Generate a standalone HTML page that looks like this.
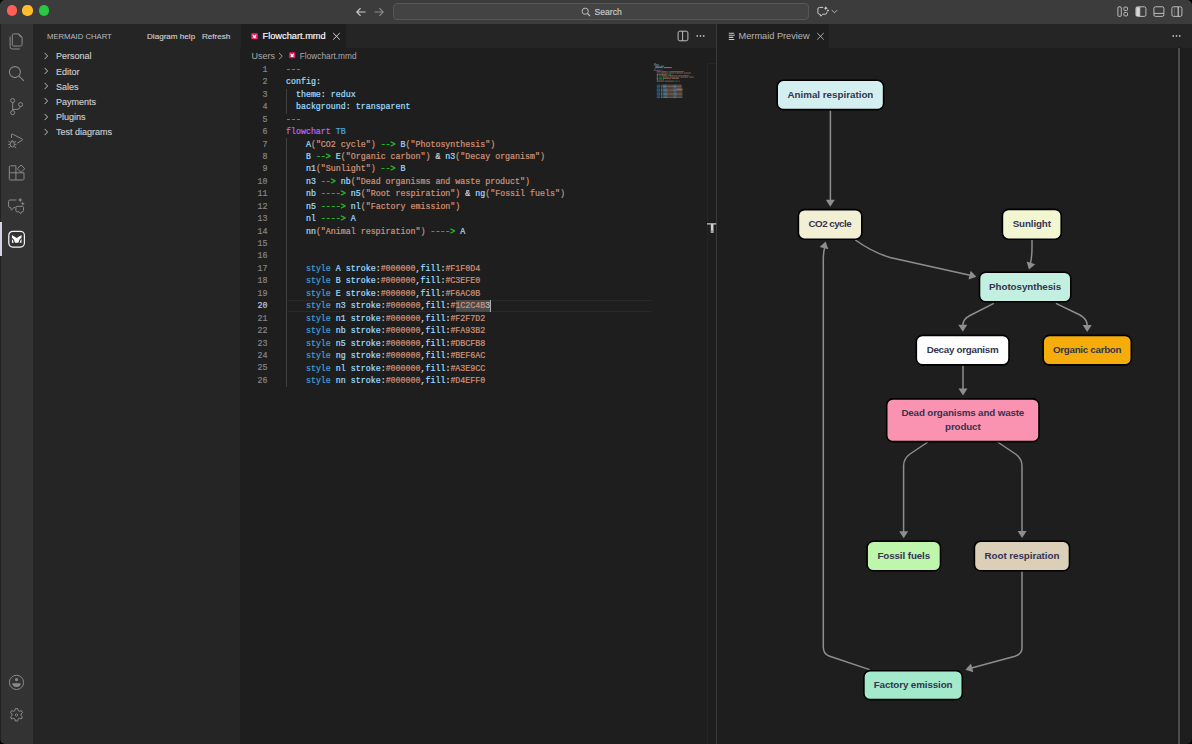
<!DOCTYPE html>
<html><head><meta charset="utf-8">
<style>
*{margin:0;padding:0;box-sizing:border-box}
html,body{width:1192px;height:744px;overflow:hidden;background:#1e1e1e;font-family:"Liberation Sans",sans-serif}
.a{position:absolute}
#title{left:0;top:0;width:1192px;height:23.8px;background:#3c3c3c}
#act{left:0;top:23.8px;width:33px;height:721px;background:#333333}
#side{left:33px;top:23.8px;width:207px;height:721px;background:#252526}
#ed{left:240px;top:23.8px;width:476px;height:721px;background:#1e1e1e}
#edtabs{left:240px;top:23.8px;width:476px;height:24px;background:#252526}
#edtab{left:241px;top:23.8px;width:105px;height:24px;background:#1e1e1e}
#sep{left:716px;top:23.8px;width:1px;height:721px;background:#3a3a3a}
#pv{left:717px;top:23.8px;width:475px;height:721px;background:#1e1e1e}
#pvtabs{left:717px;top:23.8px;width:475px;height:24px;background:#252526}
#pvtab{left:717px;top:23.8px;width:112px;height:24px;background:#1e1e1e}
.side-t{font-size:7.7px;color:#bbbbbb;white-space:nowrap}
.side-b{font-size:8.1px;color:#cccccc;white-space:nowrap;-webkit-text-stroke:0.15px #cccccc}
.tree{font-size:9px;color:#cccccc;white-space:nowrap;-webkit-text-stroke:0.15px #cccccc}
.code{-webkit-text-stroke:0.22px currentColor;font-family:"Liberation Mono",monospace;font-size:8.31px;white-space:pre;line-height:12.44px}
.ln{-webkit-text-stroke:0.2px currentColor;font-family:"Liberation Mono",monospace;font-size:8.33px;color:#858585;text-align:right;width:29.6px;line-height:12.44px}
</style></head><body>
<div id="title" class="a"></div>

<!-- traffic lights -->
<div class="a" style="left:6.7px;top:5.4px;width:10.2px;height:10.2px;border-radius:50%;background:#ff5f57"></div>
<div class="a" style="left:22.4px;top:5.4px;width:10.2px;height:10.2px;border-radius:50%;background:#febc2e"></div>
<div class="a" style="left:38.5px;top:5.4px;width:10.2px;height:10.2px;border-radius:50%;background:#28c840"></div>
<!-- nav arrows -->
<svg class="a" style="left:355px;top:7px" width="12" height="10" viewBox="0 0 12 10"><path d="M10.5 5H1.8M5.6 1.2L1.8 5l3.8 3.8" stroke="#cccccc" stroke-width="1.1" fill="none"/></svg>
<svg class="a" style="left:373px;top:7px" width="12" height="10" viewBox="0 0 12 10"><path d="M1.5 5h8.7M6.4 1.2L10.2 5 6.4 8.8" stroke="#8a8a8a" stroke-width="1.1" fill="none"/></svg>
<!-- search box -->
<div class="a" style="left:393px;top:3.3px;width:416px;height:16.4px;border-radius:4px;background:#434343;border:1px solid #575757"></div>
<svg class="a" style="left:581px;top:7px" width="10" height="10" viewBox="0 0 10 10"><circle cx="4.2" cy="4.2" r="3.1" stroke="#bbbbbb" stroke-width="1" fill="none"/><path d="M6.5 6.5L9 9" stroke="#bbbbbb" stroke-width="1.1"/></svg>
<div class="a" style="left:594.5px;top:7px;font-size:8.6px;color:#cccccc;white-space:nowrap;-webkit-text-stroke:0.15px #cccccc">Search</div>
<!-- copilot -->
<svg class="a" style="left:816px;top:5px" width="14" height="13" viewBox="0 0 14 13"><path d="M7.2 2.4H3.5Q1.9 2.4 1.9 4v3.6q0 1.6 1.6 1.6h.6l.6 2 2-2h2.6q1.6 0 1.6-1.6V6.5" stroke="#cccccc" stroke-width="1" fill="none"/><path d="M9.8 1.2l.6 1.4 1.4.6-1.4.6-.6 1.4-.6-1.4-1.4-.6 1.4-.6z" fill="#dddddd"/><path d="M12 4.3l.4.8.8.4-.8.4-.4.8-.4-.8-.8-.4.8-.4z" fill="#dddddd"/></svg>
<svg class="a" style="left:831px;top:9px" width="7" height="5" viewBox="0 0 7 5"><path d="M.7 1l2.8 2.8L6.3 1" stroke="#bbbbbb" stroke-width="0.9" fill="none"/></svg>
<!-- layout icons -->
<svg class="a" style="left:1117px;top:6px" width="12" height="11" viewBox="0 0 12 11"><rect x="0.9" y="0.8" width="3.4" height="9.6" rx="1.2" stroke="#c8c8c8" stroke-width="0.9" fill="none"/><rect x="6.9" y="1.1" width="3.6" height="3.4" rx="0.9" stroke="#c8c8c8" stroke-width="0.9" fill="none"/><rect x="6.9" y="6.5" width="3.6" height="3.4" rx="0.9" stroke="#c8c8c8" stroke-width="0.9" fill="none"/></svg>
<svg class="a" style="left:1135px;top:6px" width="12" height="11" viewBox="0 0 12 11"><rect x="0.9" y="0.8" width="10" height="9.6" rx="1.6" stroke="#c8c8c8" stroke-width="0.9" fill="none"/><rect x="1.2" y="1.2" width="3.6" height="8.8" fill="#d8d8d8"/><path d="M4.8 1v9.2" stroke="#c8c8c8" stroke-width="0.9"/></svg>
<svg class="a" style="left:1153px;top:6px" width="12" height="11" viewBox="0 0 12 11"><rect x="0.9" y="0.8" width="10" height="9.6" rx="1.6" stroke="#c8c8c8" stroke-width="0.9" fill="none"/><path d="M1 7.4h9.8" stroke="#c8c8c8" stroke-width="0.9"/></svg>
<svg class="a" style="left:1171px;top:6px" width="12" height="11" viewBox="0 0 12 11"><rect x="0.9" y="0.8" width="10" height="9.6" rx="1.6" stroke="#c8c8c8" stroke-width="0.9" fill="none"/><path d="M7.2 1v9.2" stroke="#c8c8c8" stroke-width="1.2"/><path d="M3.6 1v9.2" stroke="#777" stroke-width="0.6"/></svg>
<div id="act" class="a"></div>

<div class="a" style="left:0;top:23.8px;width:1px;height:721px;background:#222"></div>
<!-- files -->
<svg class="a" style="left:8px;top:31.7px" width="17" height="19" viewBox="0 0 17 19"><path d="M4.3 3.2Q4.3 1.9 5.6 1.9H10.8L14.1 5.2V12.7Q14.1 14 12.8 14H5.6Q4.3 14 4.3 12.7Z" stroke="#8a8a8a" stroke-width="1" fill="none"/><path d="M10.8 2Q10.9 5.1 14 5.2" stroke="#8a8a8a" stroke-width="1" fill="none"/><path d="M2.1 4.6V14.6Q2.1 17 4.5 17H11.8" stroke="#8a8a8a" stroke-width="1" fill="none"/></svg>
<!-- search -->
<svg class="a" style="left:8px;top:65px" width="18" height="18" viewBox="0 0 18 18"><circle cx="6.9" cy="7.1" r="5.5" stroke="#8a8a8a" stroke-width="1.05" fill="none"/><path d="M10.9 11.1l5 4.8" stroke="#8a8a8a" stroke-width="1.1"/></svg>
<!-- scm -->
<svg class="a" style="left:8px;top:97px" width="17" height="19" viewBox="0 0 17 19"><circle cx="4.7" cy="3.5" r="2" stroke="#8a8a8a" stroke-width="1" fill="none"/><circle cx="4.7" cy="15.6" r="2" stroke="#8a8a8a" stroke-width="1" fill="none"/><circle cx="12.6" cy="7.6" r="2" stroke="#8a8a8a" stroke-width="1" fill="none"/><path d="M4.7 5.5v8.1M12.4 9.6q-.4 2.5-3.4 2.8H4.9" stroke="#8a8a8a" stroke-width="1" fill="none"/></svg>
<!-- debug -->
<svg class="a" style="left:7px;top:132px" width="19" height="18" viewBox="0 0 19 18"><path d="M4.5 6V2.6Q4.5 1.5 5.5 2.1L15.2 7.1Q16 7.7 15.2 8.2L10.3 11.2" stroke="#8a8a8a" stroke-width="1" fill="none" stroke-linejoin="round"/><ellipse cx="5.3" cy="12.3" rx="2.1" ry="2.7" stroke="#8a8a8a" stroke-width="1" fill="none"/><path d="M3.9 9.5Q5.3 8 6.7 9.5M1.2 12.4h1.9M7.5 12.4h1.9M1.5 9.3l1.9 1.1M9.1 9.3l-1.9 1.1M1.5 15.8l1.9-1.3M9.1 15.8l-1.9-1.3" stroke="#8a8a8a" stroke-width="1" fill="none"/></svg>
<!-- extensions -->
<svg class="a" style="left:8px;top:163px" width="18" height="18" viewBox="0 0 18 18"><path d="M1.3 4.1q0-1.3 1.3-1.3h5.3v14.2H2.6q-1.3 0-1.3-1.3z M1.3 9.8h14.7v5.9q0 1.3-1.3 1.3H7.9" stroke="#8a8a8a" stroke-width="1" fill="none"/><path d="M13 2l3.7 3.7-3.7 3.7-3.7-3.7z" stroke="#8a8a8a" stroke-width="1" fill="none" stroke-linejoin="round"/></svg>
<!-- chat -->
<svg class="a" style="left:7px;top:197px" width="19" height="19" viewBox="0 0 19 19"><path d="M9.3 3H2.9Q1.6 3 1.6 4.3v4.9Q1.6 10.5 2.9 10.5h.7l.8 2.6 2.6-2.6h1.2" stroke="#8a8a8a" stroke-width="1" fill="none" stroke-linejoin="round"/><path d="M10.1 9.3h5.2q1.2 0 1.2 1.2v3.1q0 1.2-1.2 1.2h-.6l-1 1.9-1.6-1.9h-2q-1.2 0-1.2-1.2v-3.1q0-1.2 1.2-1.2z" stroke="#8a8a8a" stroke-width="1" fill="none" stroke-linejoin="round"/><path d="M13.2 .6l.7 1.7 1.7.7-1.7.7-.7 1.7-.7-1.7-1.7-.7 1.7-.7z M15.8 4.7l.6 1.4 1.4.6-1.4.6-.6 1.4-.6-1.4-1.4-.6 1.4-.6z" fill="#8a8a8a"/></svg>
<!-- active indicator -->
<div class="a" style="left:0;top:222.4px;width:1.8px;height:33.3px;background:#d4d4e6"></div>
<!-- mermaid -->
<svg class="a" style="left:7px;top:230px" width="19" height="19" viewBox="0 0 19 19"><rect x="1.8" y="1.4" width="15.6" height="15.6" rx="3.9" stroke="#f2f2f2" stroke-width="1.25" fill="none"/><path d="M4.9 5.1L9.7 7.9 14.5 5.1V12.8H4.9z" fill="#ffffff"/><path d="M4.7 8.2Q6.8 9.4 7.5 13M14.7 8.2Q12.6 9.4 11.9 13" stroke="#333" stroke-width="1.25" fill="none"/></svg>
<!-- account -->
<svg class="a" style="left:8px;top:674px" width="17" height="17" viewBox="0 0 17 17"><circle cx="8.5" cy="8.4" r="7.1" stroke="#8a8a8a" stroke-width="1" fill="none"/><circle cx="8.5" cy="5.6" r="1.6" fill="#8a8a8a"/><path d="M4.3 9.3h8.4q0 3.6-4.2 3.6-4.2 0-4.2-3.6z" fill="#8a8a8a"/></svg>
<!-- settings -->
<svg class="a" style="left:8px;top:707px" width="17" height="17" viewBox="0 0 17 17"><path d="M7.3 1.6h2.4l.4 2 1.3.7 1.9-.7 1.2 2.1-1.5 1.3v1.6l1.5 1.3-1.2 2.1-1.9-.7-1.3.7-.4 2H7.3l-.4-2-1.3-.7-1.9.7-1.2-2.1 1.5-1.3V7l-1.5-1.3 1.2-2.1 1.9.7 1.3-.7z" stroke="#8a8a8a" stroke-width="1" fill="none" stroke-linejoin="round"/><path d="M8.5 6.6l1.4 1.4-1.4 1.4-1.4-1.4z" stroke="#8a8a8a" stroke-width="0.9" fill="none"/></svg>
<div id="side" class="a"></div>
<div id="ed" class="a"></div>
<div id="edtabs" class="a"></div>
<div id="edtab" class="a"></div>
<div id="pv" class="a"></div>
<div id="pvtabs" class="a"></div>
<div id="pvtab" class="a"></div>

<div class="a side-t" style="left:47px;top:31.5px">MERMAID CHART</div>
<div class="a side-b" style="left:147px;top:32.1px">Diagram help</div>
<div class="a side-b" style="left:202px;top:32.1px">Refresh</div>
<svg class="a" style="left:43px;top:52.1px" width="7" height="8" viewBox="0 0 7 8"><path d="M1.6 .9l3 3.1-3 3.1" stroke="#c5c5c5" stroke-width="0.95" fill="none"/></svg><div class="a tree" style="left:56px;top:51.4px">Personal</div><svg class="a" style="left:43px;top:67.2px" width="7" height="8" viewBox="0 0 7 8"><path d="M1.6 .9l3 3.1-3 3.1" stroke="#c5c5c5" stroke-width="0.95" fill="none"/></svg><div class="a tree" style="left:56px;top:66.5px">Editor</div><svg class="a" style="left:43px;top:82.3px" width="7" height="8" viewBox="0 0 7 8"><path d="M1.6 .9l3 3.1-3 3.1" stroke="#c5c5c5" stroke-width="0.95" fill="none"/></svg><div class="a tree" style="left:56px;top:81.6px">Sales</div><svg class="a" style="left:43px;top:97.4px" width="7" height="8" viewBox="0 0 7 8"><path d="M1.6 .9l3 3.1-3 3.1" stroke="#c5c5c5" stroke-width="0.95" fill="none"/></svg><div class="a tree" style="left:56px;top:96.7px">Payments</div><svg class="a" style="left:43px;top:112.5px" width="7" height="8" viewBox="0 0 7 8"><path d="M1.6 .9l3 3.1-3 3.1" stroke="#c5c5c5" stroke-width="0.95" fill="none"/></svg><div class="a tree" style="left:56px;top:111.8px">Plugins</div><svg class="a" style="left:43px;top:127.6px" width="7" height="8" viewBox="0 0 7 8"><path d="M1.6 .9l3 3.1-3 3.1" stroke="#c5c5c5" stroke-width="0.95" fill="none"/></svg><div class="a tree" style="left:56px;top:126.9px">Test diagrams</div>
<svg class="a" style="left:250.6px;top:32.6px" width="7" height="6.6" viewBox="0 0 7 6.6"><rect x="0" y="0" width="7" height="6.6" rx="1.4" fill="#e5135f"/><path d="M1.5 1.5q1.3 0 2 1.3.7-1.3 2-1.3-.1 1-.5 1.8-.4.8-.5 1.6h.4l.4-.9v1.3H1.7V4l.4.9h.4q-.1-.8-.5-1.6-.4-.8-.5-1.8z" fill="#fff"/></svg>
<div class="a" style="left:262.5px;top:31.2px;font-size:9.25px;color:#ffffff;white-space:nowrap;-webkit-text-stroke:0.15px #ffffff">Flowchart.mmd</div>
<svg class="a" style="left:332px;top:32px" width="9" height="9" viewBox="0 0 9 9"><path d="M1.2 1l6.6 6.6M7.8 1L1.2 7.6" stroke="#dcdcdc" stroke-width="0.95"/></svg>
<!-- split / more -->
<svg class="a" style="left:677px;top:30px" width="12" height="12" viewBox="0 0 12 12"><rect x="1.1" y="1.2" width="9.8" height="9.6" rx="1.7" stroke="#c5c5c5" stroke-width="0.95" fill="none"/><path d="M5.6 1.3v9.5" stroke="#c5c5c5" stroke-width="0.95"/></svg>
<svg class="a" style="left:696px;top:34px" width="10" height="4" viewBox="0 0 10 4"><circle cx="1.3" cy="1.9" r="0.85" fill="#c5c5c5"/><circle cx="4.5" cy="1.9" r="0.85" fill="#c5c5c5"/><circle cx="7.7" cy="1.9" r="0.85" fill="#c5c5c5"/></svg>
<!-- breadcrumbs -->
<div class="a" style="left:251.5px;top:50.6px;font-size:9px;color:#a9a9a9;white-space:nowrap">Users</div>
<svg class="a" style="left:278px;top:52px" width="6" height="8" viewBox="0 0 6 8"><path d="M1 .9l3.3 3.2L1 7.3" stroke="#a9a9a9" stroke-width="0.9" fill="none"/></svg>
<svg class="a" style="left:289.2px;top:52.2px" width="6.4" height="6.4" viewBox="0 0 7 6.6"><rect x="0" y="0" width="7" height="6.6" rx="1.4" fill="#e5135f"/><path d="M1.5 1.5q1.3 0 2 1.3.7-1.3 2-1.3-.1 1-.5 1.8-.4.8-.5 1.6h.4l.4-.9v1.3H1.7V4l.4.9h.4q-.1-.8-.5-1.6-.4-.8-.5-1.8z" fill="#fff"/></svg>
<div class="a" style="left:299.8px;top:51.2px;font-size:8.3px;color:#a9a9a9;white-space:nowrap">Flowchart.mmd</div>
<!-- preview tab -->
<svg class="a" style="left:728px;top:31.5px" width="8" height="9" viewBox="0 0 8 9"><path d="M.8 1.2h5.4M.8 3.3h6M.8 5.4h4.6M.8 7.5h5.6" stroke="#c5c5c5" stroke-width="1.1"/></svg>
<div class="a" style="left:738.6px;top:30.9px;font-size:9.2px;color:#b5b5b5;white-space:nowrap">Mermaid Preview</div>
<svg class="a" style="left:816px;top:32px" width="9" height="9" viewBox="0 0 9 9"><path d="M1.2 1l6.6 6.6M7.8 1L1.2 7.6" stroke="#b5b5b5" stroke-width="0.9"/></svg>
<svg class="a" style="left:1172px;top:34px" width="10" height="4" viewBox="0 0 10 4"><circle cx="1.3" cy="1.9" r="0.85" fill="#c5c5c5"/><circle cx="4.5" cy="1.9" r="0.85" fill="#c5c5c5"/><circle cx="7.7" cy="1.9" r="0.85" fill="#c5c5c5"/></svg>
<!-- code -->
<div class="a" style="left:286px;top:88.64px;width:1px;height:24.88px;background:#404040"></div>
<div class="a" style="left:286px;top:138.40px;width:1px;height:248.80px;background:#404040"></div>
<div class="a" style="left:287px;top:299.5px;width:364.5px;height:12px;border-top:1px solid #282828;border-bottom:1px solid #282828"></div>
<div class="a" style="left:455.8px;top:299.5px;width:34.7px;height:12.4px;background:#4a4a4a"></div>
<div class="a ln" style="left:238px;top:63.86px;color:#858585">1</div>
<div class="a ln" style="left:238px;top:76.30px;color:#858585">2</div>
<div class="a ln" style="left:238px;top:88.74px;color:#858585">3</div>
<div class="a ln" style="left:238px;top:101.18px;color:#858585">4</div>
<div class="a ln" style="left:238px;top:113.62px;color:#858585">5</div>
<div class="a ln" style="left:238px;top:126.06px;color:#858585">6</div>
<div class="a ln" style="left:238px;top:138.50px;color:#858585">7</div>
<div class="a ln" style="left:238px;top:150.94px;color:#858585">8</div>
<div class="a ln" style="left:238px;top:163.38px;color:#858585">9</div>
<div class="a ln" style="left:238px;top:175.82px;color:#858585">10</div>
<div class="a ln" style="left:238px;top:188.26px;color:#858585">11</div>
<div class="a ln" style="left:238px;top:200.70px;color:#858585">12</div>
<div class="a ln" style="left:238px;top:213.14px;color:#858585">13</div>
<div class="a ln" style="left:238px;top:225.58px;color:#858585">14</div>
<div class="a ln" style="left:238px;top:238.02px;color:#858585">15</div>
<div class="a ln" style="left:238px;top:250.46px;color:#858585">16</div>
<div class="a ln" style="left:238px;top:262.90px;color:#858585">17</div>
<div class="a ln" style="left:238px;top:275.34px;color:#858585">18</div>
<div class="a ln" style="left:238px;top:287.78px;color:#858585">19</div>
<div class="a ln" style="left:238px;top:300.22px;color:#c6c6c6">20</div>
<div class="a ln" style="left:238px;top:312.66px;color:#858585">21</div>
<div class="a ln" style="left:238px;top:325.10px;color:#858585">22</div>
<div class="a ln" style="left:238px;top:337.54px;color:#858585">23</div>
<div class="a ln" style="left:238px;top:349.98px;color:#858585">24</div>
<div class="a ln" style="left:238px;top:362.42px;color:#858585">25</div>
<div class="a ln" style="left:238px;top:374.86px;color:#858585">26</div>
<div class="a code" style="left:286px;top:63.96px"><span style="color:#26b026;-webkit-text-stroke:0.5px #26b026">---</span></div>
<div class="a code" style="left:286px;top:76.40px"><span style="color:#9cdcfe">config</span><span style="color:#d4d4d4">:</span></div>
<div class="a code" style="left:286px;top:88.84px"><span style="color:#9cdcfe">  theme</span><span style="color:#d4d4d4">: </span><span style="color:#9cdcfe">redux</span></div>
<div class="a code" style="left:286px;top:101.28px"><span style="color:#9cdcfe">  background</span><span style="color:#d4d4d4">: </span><span style="color:#9cdcfe">transparent</span></div>
<div class="a code" style="left:286px;top:113.72px"><span style="color:#26b026;-webkit-text-stroke:0.5px #26b026">---</span></div>
<div class="a code" style="left:286px;top:126.16px"><span style="color:#bd63e6">flowchart</span><span style="color:#d4d4d4"> </span><span style="color:#4aa8e0">TB</span></div>
<div class="a code" style="left:286px;top:138.60px"><span style="color:#9cdcfe">    A</span><span style="color:#ce9178">(&quot;CO2 cycle&quot;)</span><span style="color:#d4d4d4"> </span><span style="color:#26b026;-webkit-text-stroke:0.5px #26b026">--&gt;</span><span style="color:#d4d4d4"> </span><span style="color:#9cdcfe">B</span><span style="color:#ce9178">(&quot;Photosynthesis&quot;)</span></div>
<div class="a code" style="left:286px;top:151.04px"><span style="color:#9cdcfe">    B</span><span style="color:#d4d4d4"> </span><span style="color:#26b026;-webkit-text-stroke:0.5px #26b026">--&gt;</span><span style="color:#d4d4d4"> </span><span style="color:#9cdcfe">E</span><span style="color:#ce9178">(&quot;Organic carbon&quot;)</span><span style="color:#d4d4d4"> &amp; </span><span style="color:#9cdcfe">n3</span><span style="color:#ce9178">(&quot;Decay organism&quot;)</span></div>
<div class="a code" style="left:286px;top:163.48px"><span style="color:#9cdcfe">    n1</span><span style="color:#ce9178">(&quot;Sunlight&quot;)</span><span style="color:#d4d4d4"> </span><span style="color:#26b026;-webkit-text-stroke:0.5px #26b026">--&gt;</span><span style="color:#d4d4d4"> </span><span style="color:#9cdcfe">B</span></div>
<div class="a code" style="left:286px;top:175.92px"><span style="color:#9cdcfe">    n3</span><span style="color:#d4d4d4"> </span><span style="color:#26b026;-webkit-text-stroke:0.5px #26b026">--&gt;</span><span style="color:#d4d4d4"> </span><span style="color:#9cdcfe">nb</span><span style="color:#ce9178">(&quot;Dead organisms and waste product&quot;)</span></div>
<div class="a code" style="left:286px;top:188.36px"><span style="color:#9cdcfe">    nb</span><span style="color:#d4d4d4"> </span><span style="color:#26b026;-webkit-text-stroke:0.5px #26b026">----&gt;</span><span style="color:#d4d4d4"> </span><span style="color:#9cdcfe">n5</span><span style="color:#ce9178">(&quot;Root respiration&quot;)</span><span style="color:#d4d4d4"> &amp; </span><span style="color:#9cdcfe">ng</span><span style="color:#ce9178">(&quot;Fossil fuels&quot;)</span></div>
<div class="a code" style="left:286px;top:200.80px"><span style="color:#9cdcfe">    n5</span><span style="color:#d4d4d4"> </span><span style="color:#26b026;-webkit-text-stroke:0.5px #26b026">----&gt;</span><span style="color:#d4d4d4"> </span><span style="color:#9cdcfe">nl</span><span style="color:#ce9178">(&quot;Factory emission&quot;)</span></div>
<div class="a code" style="left:286px;top:213.24px"><span style="color:#9cdcfe">    nl</span><span style="color:#d4d4d4"> </span><span style="color:#26b026;-webkit-text-stroke:0.5px #26b026">----&gt;</span><span style="color:#d4d4d4"> </span><span style="color:#9cdcfe">A</span></div>
<div class="a code" style="left:286px;top:225.68px"><span style="color:#9cdcfe">    nn</span><span style="color:#ce9178">(&quot;Animal respiration&quot;)</span><span style="color:#d4d4d4"> </span><span style="color:#26b026;-webkit-text-stroke:0.5px #26b026">----&gt;</span><span style="color:#d4d4d4"> </span><span style="color:#9cdcfe">A</span></div>
<div class="a code" style="left:286px;top:238.12px"></div>
<div class="a code" style="left:286px;top:250.56px"></div>
<div class="a code" style="left:286px;top:263.00px"><span style="color:#d4d4d4">    </span><span style="color:#3f9fd8">style</span><span style="color:#d4d4d4"> </span><span style="color:#9cdcfe">A</span><span style="color:#d4d4d4"> </span><span style="color:#9cdcfe">stroke</span><span style="color:#d4d4d4">:</span><span style="color:#ce9178">#000000</span><span style="color:#d4d4d4">,</span><span style="color:#9cdcfe">fill</span><span style="color:#d4d4d4">:</span><span style="color:#ce9178">#F1F0D4</span></div>
<div class="a code" style="left:286px;top:275.44px"><span style="color:#d4d4d4">    </span><span style="color:#3f9fd8">style</span><span style="color:#d4d4d4"> </span><span style="color:#9cdcfe">B</span><span style="color:#d4d4d4"> </span><span style="color:#9cdcfe">stroke</span><span style="color:#d4d4d4">:</span><span style="color:#ce9178">#000000</span><span style="color:#d4d4d4">,</span><span style="color:#9cdcfe">fill</span><span style="color:#d4d4d4">:</span><span style="color:#ce9178">#C3EFE0</span></div>
<div class="a code" style="left:286px;top:287.88px"><span style="color:#d4d4d4">    </span><span style="color:#3f9fd8">style</span><span style="color:#d4d4d4"> </span><span style="color:#9cdcfe">E</span><span style="color:#d4d4d4"> </span><span style="color:#9cdcfe">stroke</span><span style="color:#d4d4d4">:</span><span style="color:#ce9178">#000000</span><span style="color:#d4d4d4">,</span><span style="color:#9cdcfe">fill</span><span style="color:#d4d4d4">:</span><span style="color:#ce9178">#F6AC0B</span></div>
<div class="a code" style="left:286px;top:300.32px"><span style="color:#d4d4d4">    </span><span style="color:#3f9fd8">style</span><span style="color:#d4d4d4"> </span><span style="color:#9cdcfe">n3</span><span style="color:#d4d4d4"> </span><span style="color:#9cdcfe">stroke</span><span style="color:#d4d4d4">:</span><span style="color:#ce9178">#000000</span><span style="color:#d4d4d4">,</span><span style="color:#9cdcfe">fill</span><span style="color:#d4d4d4">:</span><span style="color:#ce9178">#1C2C4B</span><span style="color:#bbbbbb">3</span></div>
<div class="a code" style="left:286px;top:312.76px"><span style="color:#d4d4d4">    </span><span style="color:#3f9fd8">style</span><span style="color:#d4d4d4"> </span><span style="color:#9cdcfe">n1</span><span style="color:#d4d4d4"> </span><span style="color:#9cdcfe">stroke</span><span style="color:#d4d4d4">:</span><span style="color:#ce9178">#000000</span><span style="color:#d4d4d4">,</span><span style="color:#9cdcfe">fill</span><span style="color:#d4d4d4">:</span><span style="color:#ce9178">#F2F7D2</span></div>
<div class="a code" style="left:286px;top:325.20px"><span style="color:#d4d4d4">    </span><span style="color:#3f9fd8">style</span><span style="color:#d4d4d4"> </span><span style="color:#9cdcfe">nb</span><span style="color:#d4d4d4"> </span><span style="color:#9cdcfe">stroke</span><span style="color:#d4d4d4">:</span><span style="color:#ce9178">#000000</span><span style="color:#d4d4d4">,</span><span style="color:#9cdcfe">fill</span><span style="color:#d4d4d4">:</span><span style="color:#ce9178">#FA93B2</span></div>
<div class="a code" style="left:286px;top:337.64px"><span style="color:#d4d4d4">    </span><span style="color:#3f9fd8">style</span><span style="color:#d4d4d4"> </span><span style="color:#9cdcfe">n5</span><span style="color:#d4d4d4"> </span><span style="color:#9cdcfe">stroke</span><span style="color:#d4d4d4">:</span><span style="color:#ce9178">#000000</span><span style="color:#d4d4d4">,</span><span style="color:#9cdcfe">fill</span><span style="color:#d4d4d4">:</span><span style="color:#ce9178">#DBCFB8</span></div>
<div class="a code" style="left:286px;top:350.08px"><span style="color:#d4d4d4">    </span><span style="color:#3f9fd8">style</span><span style="color:#d4d4d4"> </span><span style="color:#9cdcfe">ng</span><span style="color:#d4d4d4"> </span><span style="color:#9cdcfe">stroke</span><span style="color:#d4d4d4">:</span><span style="color:#ce9178">#000000</span><span style="color:#d4d4d4">,</span><span style="color:#9cdcfe">fill</span><span style="color:#d4d4d4">:</span><span style="color:#ce9178">#BEF6AC</span></div>
<div class="a code" style="left:286px;top:362.52px"><span style="color:#d4d4d4">    </span><span style="color:#3f9fd8">style</span><span style="color:#d4d4d4"> </span><span style="color:#9cdcfe">nl</span><span style="color:#d4d4d4"> </span><span style="color:#9cdcfe">stroke</span><span style="color:#d4d4d4">:</span><span style="color:#ce9178">#000000</span><span style="color:#d4d4d4">,</span><span style="color:#9cdcfe">fill</span><span style="color:#d4d4d4">:</span><span style="color:#ce9178">#A3E9CC</span></div>
<div class="a code" style="left:286px;top:374.96px"><span style="color:#d4d4d4">    </span><span style="color:#3f9fd8">style</span><span style="color:#d4d4d4"> </span><span style="color:#9cdcfe">nn</span><span style="color:#d4d4d4"> </span><span style="color:#9cdcfe">stroke</span><span style="color:#d4d4d4">:</span><span style="color:#ce9178">#000000</span><span style="color:#d4d4d4">,</span><span style="color:#9cdcfe">fill</span><span style="color:#d4d4d4">:</span><span style="color:#ce9178">#D4EFF0</span></div>
<div class="a" style="left:490.2px;top:299.8px;width:1.1px;height:12px;background:#aeafad"></div>
<svg class="a" style="left:0;top:0" width="1192" height="744" viewBox="0 0 1192 744">
<path d="M830.4 110.5V201" stroke="#8e8e8e" stroke-width="1.5" fill="none"/><path d="M830.30 206.80L825.80 199.80L834.80 199.80z" fill="#8e8e8e"/>
<path d="M855.4 240Q872 252 890 257.5L970 275.3" stroke="#8e8e8e" stroke-width="1.5" fill="none"/><path d="M976.39 276.85L968.53 279.57L970.65 270.82z" fill="#8e8e8e"/>
<path d="M1032 240V247Q1032 257 1030.4 263.5" stroke="#8e8e8e" stroke-width="1.5" fill="none"/><path d="M1028.94 269.59L1026.64 261.59L1035.26 264.17z" fill="#8e8e8e"/>
<path d="M993.8 303.4L970 315.5Q963 319 962.8 325" stroke="#8e8e8e" stroke-width="1.5" fill="none"/><path d="M962.80 331.80L958.30 324.80L967.30 324.80z" fill="#8e8e8e"/>
<path d="M1055.9 303.4L1080 315Q1087 319 1087.2 325" stroke="#8e8e8e" stroke-width="1.5" fill="none"/><path d="M1087.20 332.10L1082.70 325.10L1091.70 325.10z" fill="#8e8e8e"/>
<path d="M963 365.5V389" stroke="#8e8e8e" stroke-width="1.5" fill="none"/><path d="M963.00 395.40L958.50 388.40L967.50 388.40z" fill="#8e8e8e"/>
<path d="M928 442L910 454Q903.6 458.5 903.6 466V532" stroke="#8e8e8e" stroke-width="1.5" fill="none"/><path d="M903.70 538.20L899.20 531.20L908.20 531.20z" fill="#8e8e8e"/>
<path d="M997.6 442L1015.5 454Q1022 458.5 1022 466V532" stroke="#8e8e8e" stroke-width="1.5" fill="none"/><path d="M1022.10 538.00L1017.60 531.00L1026.60 531.00z" fill="#8e8e8e"/>
<path d="M1022 571.5V648Q1022 654 1015 656.2L971.5 668" stroke="#8e8e8e" stroke-width="1.5" fill="none"/><path d="M965.41 669.65L971.01 663.50L973.33 672.19z" fill="#8e8e8e"/>
<path d="M869.6 669.6L829 656Q823.3 654 823.3 647V260Q823.3 252 824.8 247" stroke="#8e8e8e" stroke-width="1.5" fill="none"/><path d="M825.65 241.41L828.32 249.29L819.59 247.10z" fill="#8e8e8e"/>
<rect x="777.2" y="80.3" width="106.4" height="29.3" rx="6.2" fill="#D4EFF0" stroke="#000" stroke-width="1.6"/>
<text x="830.40" y="97.50" text-anchor="middle" textLength="85.9" lengthAdjust="spacing" font-family="Liberation Sans" font-weight="700" font-size="9.8" fill="#34344f">Animal respiration</text>
<rect x="798.4" y="209.6" width="63.4" height="29.6" rx="6.2" fill="#F1F0D4" stroke="#000" stroke-width="1.6"/>
<text x="830.10" y="226.95" text-anchor="middle" textLength="43.1" lengthAdjust="spacing" font-family="Liberation Sans" font-weight="700" font-size="9.8" fill="#34344f">CO2 cycle</text>
<rect x="1002.4" y="209.4" width="58.8" height="29.8" rx="6.2" fill="#F2F7D2" stroke="#000" stroke-width="1.6"/>
<text x="1031.80" y="226.85" text-anchor="middle" textLength="38.3" lengthAdjust="spacing" font-family="Liberation Sans" font-weight="700" font-size="9.8" fill="#34344f">Sunlight</text>
<rect x="979.5" y="272.2" width="91.3" height="29.6" rx="6.2" fill="#C3EFE0" stroke="#000" stroke-width="1.6"/>
<text x="1025.15" y="289.55" text-anchor="middle" textLength="72.1" lengthAdjust="spacing" font-family="Liberation Sans" font-weight="700" font-size="9.8" fill="#34344f">Photosynthesis</text>
<rect x="916.3" y="335.4" width="92.7" height="29.5" rx="6.2" fill="#FFFFFF" stroke="#000" stroke-width="1.6"/>
<text x="962.65" y="352.70" text-anchor="middle" textLength="72.0" lengthAdjust="spacing" font-family="Liberation Sans" font-weight="700" font-size="9.8" fill="#34344f">Decay organism</text>
<rect x="1043.2" y="335.4" width="88.1" height="29.5" rx="6.2" fill="#F6AC0B" stroke="#000" stroke-width="1.6"/>
<text x="1087.25" y="352.70" text-anchor="middle" textLength="68.5" lengthAdjust="spacing" font-family="Liberation Sans" font-weight="700" font-size="9.8" fill="#34344f">Organic carbon</text>
<rect x="886.7" y="398.9" width="152.3" height="42.7" rx="6.2" fill="#FA93B2" stroke="#000" stroke-width="1.6"/>
<text x="962.85" y="415.80" text-anchor="middle" textLength="122.9" lengthAdjust="spacing" font-family="Liberation Sans" font-weight="700" font-size="9.8" fill="#34344f">Dead organisms and waste</text>
<text x="962.85" y="429.80" text-anchor="middle" textLength="35.6" lengthAdjust="spacing" font-family="Liberation Sans" font-weight="700" font-size="9.8" fill="#34344f">product</text>
<rect x="867.1" y="541.3" width="73.4" height="29.5" rx="6.2" fill="#BEF6AC" stroke="#000" stroke-width="1.6"/>
<text x="903.80" y="558.60" text-anchor="middle" textLength="52.8" lengthAdjust="spacing" font-family="Liberation Sans" font-weight="700" font-size="9.8" fill="#34344f">Fossil fuels</text>
<rect x="974.4" y="541.3" width="95.1" height="29.5" rx="6.2" fill="#DBCFB8" stroke="#000" stroke-width="1.6"/>
<text x="1021.95" y="558.60" text-anchor="middle" textLength="74.9" lengthAdjust="spacing" font-family="Liberation Sans" font-weight="700" font-size="9.8" fill="#34344f">Root respiration</text>
<rect x="863.9" y="670.7" width="98.4" height="28.9" rx="6.2" fill="#A3E9CC" stroke="#000" stroke-width="1.6"/>
<text x="913.10" y="687.70" text-anchor="middle" textLength="78.8" lengthAdjust="spacing" font-family="Liberation Sans" font-weight="700" font-size="9.8" fill="#34344f">Factory emission</text>
</svg>
<!-- minimap -->
<svg class="a" style="left:0;top:0;filter:blur(0.25px)" width="1192" height="744" viewBox="0 0 1192 744"><g opacity="0.5"><rect x="653.90" y="63.00" width="2.14" height="1.05" fill="#26b026"/><rect x="653.90" y="64.36" width="4.28" height="1.05" fill="#9cdcfe"/><rect x="658.18" y="64.36" width="0.71" height="1.05" fill="#d4d4d4"/><rect x="655.33" y="65.71" width="3.56" height="1.05" fill="#9cdcfe"/><rect x="658.89" y="65.71" width="0.71" height="1.05" fill="#d4d4d4"/><rect x="660.32" y="65.71" width="3.56" height="1.05" fill="#9cdcfe"/><rect x="655.33" y="67.06" width="7.13" height="1.05" fill="#9cdcfe"/><rect x="662.46" y="67.06" width="0.71" height="1.05" fill="#d4d4d4"/><rect x="663.88" y="67.06" width="7.84" height="1.05" fill="#9cdcfe"/><rect x="653.90" y="68.42" width="2.14" height="1.05" fill="#26b026"/><rect x="653.90" y="69.78" width="6.42" height="1.05" fill="#bd63e6"/><rect x="661.03" y="69.78" width="1.43" height="1.05" fill="#4aa8e0"/><rect x="656.75" y="71.13" width="0.71" height="1.05" fill="#9cdcfe"/><rect x="657.47" y="71.13" width="3.56" height="1.05" fill="#ce9178"/><rect x="661.74" y="71.13" width="4.99" height="1.05" fill="#ce9178"/><rect x="667.45" y="71.13" width="2.14" height="1.05" fill="#26b026"/><rect x="670.30" y="71.13" width="0.71" height="1.05" fill="#9cdcfe"/><rect x="671.01" y="71.13" width="12.83" height="1.05" fill="#ce9178"/><rect x="656.75" y="72.48" width="0.71" height="1.05" fill="#9cdcfe"/><rect x="658.18" y="72.48" width="2.14" height="1.05" fill="#26b026"/><rect x="661.03" y="72.48" width="0.71" height="1.05" fill="#9cdcfe"/><rect x="661.74" y="72.48" width="6.42" height="1.05" fill="#ce9178"/><rect x="668.87" y="72.48" width="5.70" height="1.05" fill="#ce9178"/><rect x="675.29" y="72.48" width="0.71" height="1.05" fill="#d4d4d4"/><rect x="676.72" y="72.48" width="1.43" height="1.05" fill="#9cdcfe"/><rect x="678.14" y="72.48" width="4.99" height="1.05" fill="#ce9178"/><rect x="683.85" y="72.48" width="7.13" height="1.05" fill="#ce9178"/><rect x="656.75" y="73.84" width="1.43" height="1.05" fill="#9cdcfe"/><rect x="658.18" y="73.84" width="8.56" height="1.05" fill="#ce9178"/><rect x="667.45" y="73.84" width="2.14" height="1.05" fill="#26b026"/><rect x="670.30" y="73.84" width="0.71" height="1.05" fill="#9cdcfe"/><rect x="656.75" y="75.19" width="1.43" height="1.05" fill="#9cdcfe"/><rect x="658.89" y="75.19" width="2.14" height="1.05" fill="#26b026"/><rect x="661.74" y="75.19" width="1.43" height="1.05" fill="#9cdcfe"/><rect x="663.17" y="75.19" width="4.28" height="1.05" fill="#ce9178"/><rect x="668.16" y="75.19" width="6.42" height="1.05" fill="#ce9178"/><rect x="675.29" y="75.19" width="2.14" height="1.05" fill="#ce9178"/><rect x="678.14" y="75.19" width="3.56" height="1.05" fill="#ce9178"/><rect x="682.42" y="75.19" width="6.42" height="1.05" fill="#ce9178"/><rect x="656.75" y="76.55" width="1.43" height="1.05" fill="#9cdcfe"/><rect x="658.89" y="76.55" width="3.56" height="1.05" fill="#26b026"/><rect x="663.17" y="76.55" width="1.43" height="1.05" fill="#9cdcfe"/><rect x="664.60" y="76.55" width="4.28" height="1.05" fill="#ce9178"/><rect x="669.59" y="76.55" width="9.27" height="1.05" fill="#ce9178"/><rect x="679.57" y="76.55" width="0.71" height="1.05" fill="#d4d4d4"/><rect x="680.99" y="76.55" width="1.43" height="1.05" fill="#9cdcfe"/><rect x="682.42" y="76.55" width="5.70" height="1.05" fill="#ce9178"/><rect x="688.84" y="76.55" width="4.99" height="1.05" fill="#ce9178"/><rect x="656.75" y="77.91" width="1.43" height="1.05" fill="#9cdcfe"/><rect x="658.89" y="77.91" width="3.56" height="1.05" fill="#26b026"/><rect x="663.17" y="77.91" width="1.43" height="1.05" fill="#9cdcfe"/><rect x="664.60" y="77.91" width="6.42" height="1.05" fill="#ce9178"/><rect x="671.73" y="77.91" width="7.13" height="1.05" fill="#ce9178"/><rect x="656.75" y="79.26" width="1.43" height="1.05" fill="#9cdcfe"/><rect x="658.89" y="79.26" width="3.56" height="1.05" fill="#26b026"/><rect x="663.17" y="79.26" width="0.71" height="1.05" fill="#9cdcfe"/><rect x="656.75" y="80.61" width="1.43" height="1.05" fill="#9cdcfe"/><rect x="658.18" y="80.61" width="5.70" height="1.05" fill="#ce9178"/><rect x="664.60" y="80.61" width="9.27" height="1.05" fill="#ce9178"/><rect x="674.58" y="80.61" width="3.56" height="1.05" fill="#26b026"/><rect x="678.86" y="80.61" width="0.71" height="1.05" fill="#9cdcfe"/><rect x="656.75" y="84.68" width="3.56" height="1.05" fill="#3f9fd8"/><rect x="661.03" y="84.68" width="0.71" height="1.05" fill="#9cdcfe"/><rect x="662.46" y="84.68" width="4.28" height="1.05" fill="#9cdcfe"/><rect x="666.73" y="84.68" width="0.71" height="1.05" fill="#d4d4d4"/><rect x="667.45" y="84.68" width="4.99" height="1.05" fill="#ce9178"/><rect x="672.44" y="84.68" width="0.71" height="1.05" fill="#d4d4d4"/><rect x="673.15" y="84.68" width="2.85" height="1.05" fill="#9cdcfe"/><rect x="676.00" y="84.68" width="0.71" height="1.05" fill="#d4d4d4"/><rect x="676.72" y="84.68" width="4.99" height="1.05" fill="#ce9178"/><rect x="656.75" y="86.03" width="3.56" height="1.05" fill="#3f9fd8"/><rect x="661.03" y="86.03" width="0.71" height="1.05" fill="#9cdcfe"/><rect x="662.46" y="86.03" width="4.28" height="1.05" fill="#9cdcfe"/><rect x="666.73" y="86.03" width="0.71" height="1.05" fill="#d4d4d4"/><rect x="667.45" y="86.03" width="4.99" height="1.05" fill="#ce9178"/><rect x="672.44" y="86.03" width="0.71" height="1.05" fill="#d4d4d4"/><rect x="673.15" y="86.03" width="2.85" height="1.05" fill="#9cdcfe"/><rect x="676.00" y="86.03" width="0.71" height="1.05" fill="#d4d4d4"/><rect x="676.72" y="86.03" width="4.99" height="1.05" fill="#ce9178"/><rect x="656.75" y="87.39" width="3.56" height="1.05" fill="#3f9fd8"/><rect x="661.03" y="87.39" width="0.71" height="1.05" fill="#9cdcfe"/><rect x="662.46" y="87.39" width="4.28" height="1.05" fill="#9cdcfe"/><rect x="666.73" y="87.39" width="0.71" height="1.05" fill="#d4d4d4"/><rect x="667.45" y="87.39" width="4.99" height="1.05" fill="#ce9178"/><rect x="672.44" y="87.39" width="0.71" height="1.05" fill="#d4d4d4"/><rect x="673.15" y="87.39" width="2.85" height="1.05" fill="#9cdcfe"/><rect x="676.00" y="87.39" width="0.71" height="1.05" fill="#d4d4d4"/><rect x="676.72" y="87.39" width="4.99" height="1.05" fill="#ce9178"/><rect x="656.75" y="88.75" width="3.56" height="1.05" fill="#3f9fd8"/><rect x="661.03" y="88.75" width="1.43" height="1.05" fill="#9cdcfe"/><rect x="663.17" y="88.75" width="4.28" height="1.05" fill="#9cdcfe"/><rect x="667.45" y="88.75" width="0.71" height="1.05" fill="#d4d4d4"/><rect x="668.16" y="88.75" width="4.99" height="1.05" fill="#ce9178"/><rect x="673.15" y="88.75" width="0.71" height="1.05" fill="#d4d4d4"/><rect x="673.86" y="88.75" width="2.85" height="1.05" fill="#9cdcfe"/><rect x="676.72" y="88.75" width="0.71" height="1.05" fill="#d4d4d4"/><rect x="677.43" y="88.75" width="5.70" height="1.05" fill="#ce9178"/><rect x="656.75" y="90.10" width="3.56" height="1.05" fill="#3f9fd8"/><rect x="661.03" y="90.10" width="1.43" height="1.05" fill="#9cdcfe"/><rect x="663.17" y="90.10" width="4.28" height="1.05" fill="#9cdcfe"/><rect x="667.45" y="90.10" width="0.71" height="1.05" fill="#d4d4d4"/><rect x="668.16" y="90.10" width="4.99" height="1.05" fill="#ce9178"/><rect x="673.15" y="90.10" width="0.71" height="1.05" fill="#d4d4d4"/><rect x="673.86" y="90.10" width="2.85" height="1.05" fill="#9cdcfe"/><rect x="676.72" y="90.10" width="0.71" height="1.05" fill="#d4d4d4"/><rect x="677.43" y="90.10" width="4.99" height="1.05" fill="#ce9178"/><rect x="656.75" y="91.45" width="3.56" height="1.05" fill="#3f9fd8"/><rect x="661.03" y="91.45" width="1.43" height="1.05" fill="#9cdcfe"/><rect x="663.17" y="91.45" width="4.28" height="1.05" fill="#9cdcfe"/><rect x="667.45" y="91.45" width="0.71" height="1.05" fill="#d4d4d4"/><rect x="668.16" y="91.45" width="4.99" height="1.05" fill="#ce9178"/><rect x="673.15" y="91.45" width="0.71" height="1.05" fill="#d4d4d4"/><rect x="673.86" y="91.45" width="2.85" height="1.05" fill="#9cdcfe"/><rect x="676.72" y="91.45" width="0.71" height="1.05" fill="#d4d4d4"/><rect x="677.43" y="91.45" width="4.99" height="1.05" fill="#ce9178"/><rect x="656.75" y="92.81" width="3.56" height="1.05" fill="#3f9fd8"/><rect x="661.03" y="92.81" width="1.43" height="1.05" fill="#9cdcfe"/><rect x="663.17" y="92.81" width="4.28" height="1.05" fill="#9cdcfe"/><rect x="667.45" y="92.81" width="0.71" height="1.05" fill="#d4d4d4"/><rect x="668.16" y="92.81" width="4.99" height="1.05" fill="#ce9178"/><rect x="673.15" y="92.81" width="0.71" height="1.05" fill="#d4d4d4"/><rect x="673.86" y="92.81" width="2.85" height="1.05" fill="#9cdcfe"/><rect x="676.72" y="92.81" width="0.71" height="1.05" fill="#d4d4d4"/><rect x="677.43" y="92.81" width="4.99" height="1.05" fill="#ce9178"/><rect x="656.75" y="94.16" width="3.56" height="1.05" fill="#3f9fd8"/><rect x="661.03" y="94.16" width="1.43" height="1.05" fill="#9cdcfe"/><rect x="663.17" y="94.16" width="4.28" height="1.05" fill="#9cdcfe"/><rect x="667.45" y="94.16" width="0.71" height="1.05" fill="#d4d4d4"/><rect x="668.16" y="94.16" width="4.99" height="1.05" fill="#ce9178"/><rect x="673.15" y="94.16" width="0.71" height="1.05" fill="#d4d4d4"/><rect x="673.86" y="94.16" width="2.85" height="1.05" fill="#9cdcfe"/><rect x="676.72" y="94.16" width="0.71" height="1.05" fill="#d4d4d4"/><rect x="677.43" y="94.16" width="4.99" height="1.05" fill="#ce9178"/><rect x="656.75" y="95.52" width="3.56" height="1.05" fill="#3f9fd8"/><rect x="661.03" y="95.52" width="1.43" height="1.05" fill="#9cdcfe"/><rect x="663.17" y="95.52" width="4.28" height="1.05" fill="#9cdcfe"/><rect x="667.45" y="95.52" width="0.71" height="1.05" fill="#d4d4d4"/><rect x="668.16" y="95.52" width="4.99" height="1.05" fill="#ce9178"/><rect x="673.15" y="95.52" width="0.71" height="1.05" fill="#d4d4d4"/><rect x="673.86" y="95.52" width="2.85" height="1.05" fill="#9cdcfe"/><rect x="676.72" y="95.52" width="0.71" height="1.05" fill="#d4d4d4"/><rect x="677.43" y="95.52" width="4.99" height="1.05" fill="#ce9178"/><rect x="656.75" y="96.88" width="3.56" height="1.05" fill="#3f9fd8"/><rect x="661.03" y="96.88" width="1.43" height="1.05" fill="#9cdcfe"/><rect x="663.17" y="96.88" width="4.28" height="1.05" fill="#9cdcfe"/><rect x="667.45" y="96.88" width="0.71" height="1.05" fill="#d4d4d4"/><rect x="668.16" y="96.88" width="4.99" height="1.05" fill="#ce9178"/><rect x="673.15" y="96.88" width="0.71" height="1.05" fill="#d4d4d4"/><rect x="673.86" y="96.88" width="2.85" height="1.05" fill="#9cdcfe"/><rect x="676.72" y="96.88" width="0.71" height="1.05" fill="#d4d4d4"/><rect x="677.43" y="96.88" width="4.99" height="1.05" fill="#ce9178"/></g><rect x="676.72" y="88.55" width="4.99" height="1.5" fill="#888" opacity="0.7"/></svg>
<div id="sep" class="a"></div>

<!-- editor scrollbar track outline -->
<div class="a" style="left:707px;top:63px;width:9.4px;height:681px;border-left:1px solid #252525;border-top:1px solid #252525"></div>
<!-- preview scrollbar -->
<div class="a" style="left:1177.8px;top:48.2px;width:2.6px;height:696px;background:#4c4c4c;box-shadow:0 0 0 0.6px #191919"></div>
<!-- I-beam mouse cursor -->
<svg class="a" style="left:704px;top:221px" width="16" height="14" viewBox="0 0 16 14"><path d="M2.5 1.6h10.2v2.2H9.9v8.6H6.3V3.8H2.5z" fill="#111" opacity="0.8"/><path d="M3 2.2h9.4v1.3H9.5v8.4H6.8V3.5H3z" fill="#cfcfcf"/><rect x="6.8" y="9.6" width="2.7" height="2.2" fill="#9a9a9a"/></svg>
<!-- window corners -->
<svg class="a" style="left:0;top:0" width="6" height="6" viewBox="0 0 6 6"><path d="M0 0H5A5 5 0 0 0 0 5z" fill="#000"/></svg>
<svg class="a" style="left:1186px;top:0" width="6" height="6" viewBox="0 0 6 6"><path d="M6 0H1A5 5 0 0 1 6 5z" fill="#000"/></svg>
<svg class="a" style="left:0;top:738px" width="6" height="6" viewBox="0 0 6 6"><path d="M0 6H5A5 5 0 0 1 0 1z" fill="#000"/></svg>
<svg class="a" style="left:1186px;top:738px" width="6" height="6" viewBox="0 0 6 6"><path d="M6 6H1A5 5 0 0 0 6 1z" fill="#000"/></svg>
</body></html>
